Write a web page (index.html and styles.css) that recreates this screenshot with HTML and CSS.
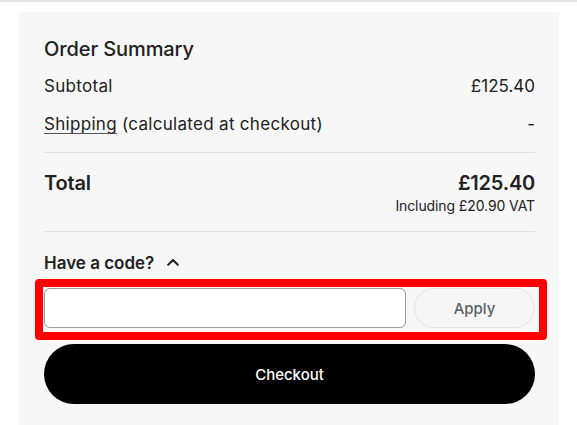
FILE: index.html
```html
<!DOCTYPE html>
<html lang="en">
<head>
<meta charset="utf-8">
<title>Order Summary</title>
<link rel="stylesheet" href="styles.css">
</head>
<body>
<div class="topline"></div>
<section class="summary">
  <h2 class="summary-title">Order Summary</h2>
  <div class="row">
    <span>Subtotal</span>
    <span class="amount">£125.40</span>
  </div>
  <div class="row">
    <span><a class="link" href="#">Shipping</a> (calculated at checkout)</span>
    <span class="amount">-</span>
  </div>
  <hr class="divider">
  <div class="total">
    <span class="total-label">Total</span>
    <div class="total-right">
      <span class="total-price">£125.40</span>
      <span class="vat">Including £20.90 VAT</span>
    </div>
  </div>
  <hr class="divider divider-2">
  <button class="code-toggle" type="button">
    <span>Have a code?</span>
    <svg class="chevron" width="12" height="8" viewBox="0 0 12 8" aria-hidden="true">
      <path d="M1.2 6.8 L6 2 L10.8 6.8" fill="none" stroke="#222" stroke-width="2" stroke-linecap="round" stroke-linejoin="round"/>
    </svg>
  </button>
  <div class="code-row">
    <input class="code-input" type="text" aria-label="Discount code">
    <button class="apply" type="button">Apply</button>
  </div>
  <button class="checkout" type="button">Checkout</button>
</section>
</body>
</html>
```

FILE: styles.css
```css
* {
  box-sizing: border-box;
}

html, body {
  margin: 0;
  padding: 0;
  background: #ffffff;
}

body {
  font-family: Inter, "Noto Sans", Arial, sans-serif;
  color: #222222;
  height: 425px;
  overflow: hidden;
}

.topline {
  height: 2px;
  background: #e4e4e4;
}

.summary {
  margin: 10px 0 0 19px;
  width: 540px;
  background: #f7f7f7;
  padding: 23px 24px 24px 25px;
}

.summary-title {
  margin: 0 0 4px;
  font-size: 20px;
  line-height: 28px;
  font-weight: 500;
  letter-spacing: -0.1px;
}

.row {
  display: flex;
  justify-content: space-between;
  align-items: baseline;
  padding: 7px 0;
  font-size: 17px;
  line-height: 24px;
  letter-spacing: 0.3px;
}

.row .amount {
  letter-spacing: 0;
}

.link {
  color: inherit;
  text-decoration: underline;
  text-decoration-thickness: 1px;
  text-underline-offset: 3px;
  text-decoration-color: #555;
}

.divider {
  border: 0;
  height: 1px;
  background: #e2e2e2;
  margin: 9px 0 16px;
}

.divider-2 {
  margin: 16px 0 19px;
}

.total {
  display: flex;
  justify-content: space-between;
  align-items: flex-start;
}

.total-label,
.total-price {
  font-size: 20px;
  line-height: 28px;
  font-weight: 600;
  letter-spacing: -0.2px;
}

.total-right {
  display: flex;
  flex-direction: column;
  align-items: flex-end;
}

.vat {
  font-size: 14px;
  line-height: 18px;
  letter-spacing: -0.1px;
}

.code-toggle {
  display: flex;
  align-items: center;
  gap: 13px;
  padding: 0;
  border: 0;
  background: none;
  font: inherit;
  color: inherit;
  font-size: 17px;
  line-height: 24px;
  font-weight: 600;
  cursor: pointer;
}

.chevron {
  margin-top: -2px;
}

.code-row {
  display: flex;
  gap: 8px;
  margin: 4px -12px 0 -9px;
  padding: 1px 4px 4px 1px;
  border: 8px solid #ff0000;
  border-radius: 4px;
}

.code-input {
  flex: 1;
  height: 40px;
  border: 1px solid #9a9a9a;
  border-radius: 6px;
  background: #ffffff;
  font: inherit;
  font-size: 16px;
  padding: 0 12px;
}

.apply {
  width: 121px;
  height: 40px;
  border: 1px solid #e3e3e3;
  border-radius: 20px;
  background: #f6f6f6;
  color: #5a5f66;
  font: inherit;
  font-size: 15px;
  font-weight: 500;
  cursor: pointer;
}

.checkout {
  display: block;
  width: 100%;
  height: 60px;
  margin-top: 4px;
  border: 0;
  border-radius: 30px;
  background: #000000;
  color: #ffffff;
  font: inherit;
  font-size: 15px;
  font-weight: 500;
  cursor: pointer;
}
```
